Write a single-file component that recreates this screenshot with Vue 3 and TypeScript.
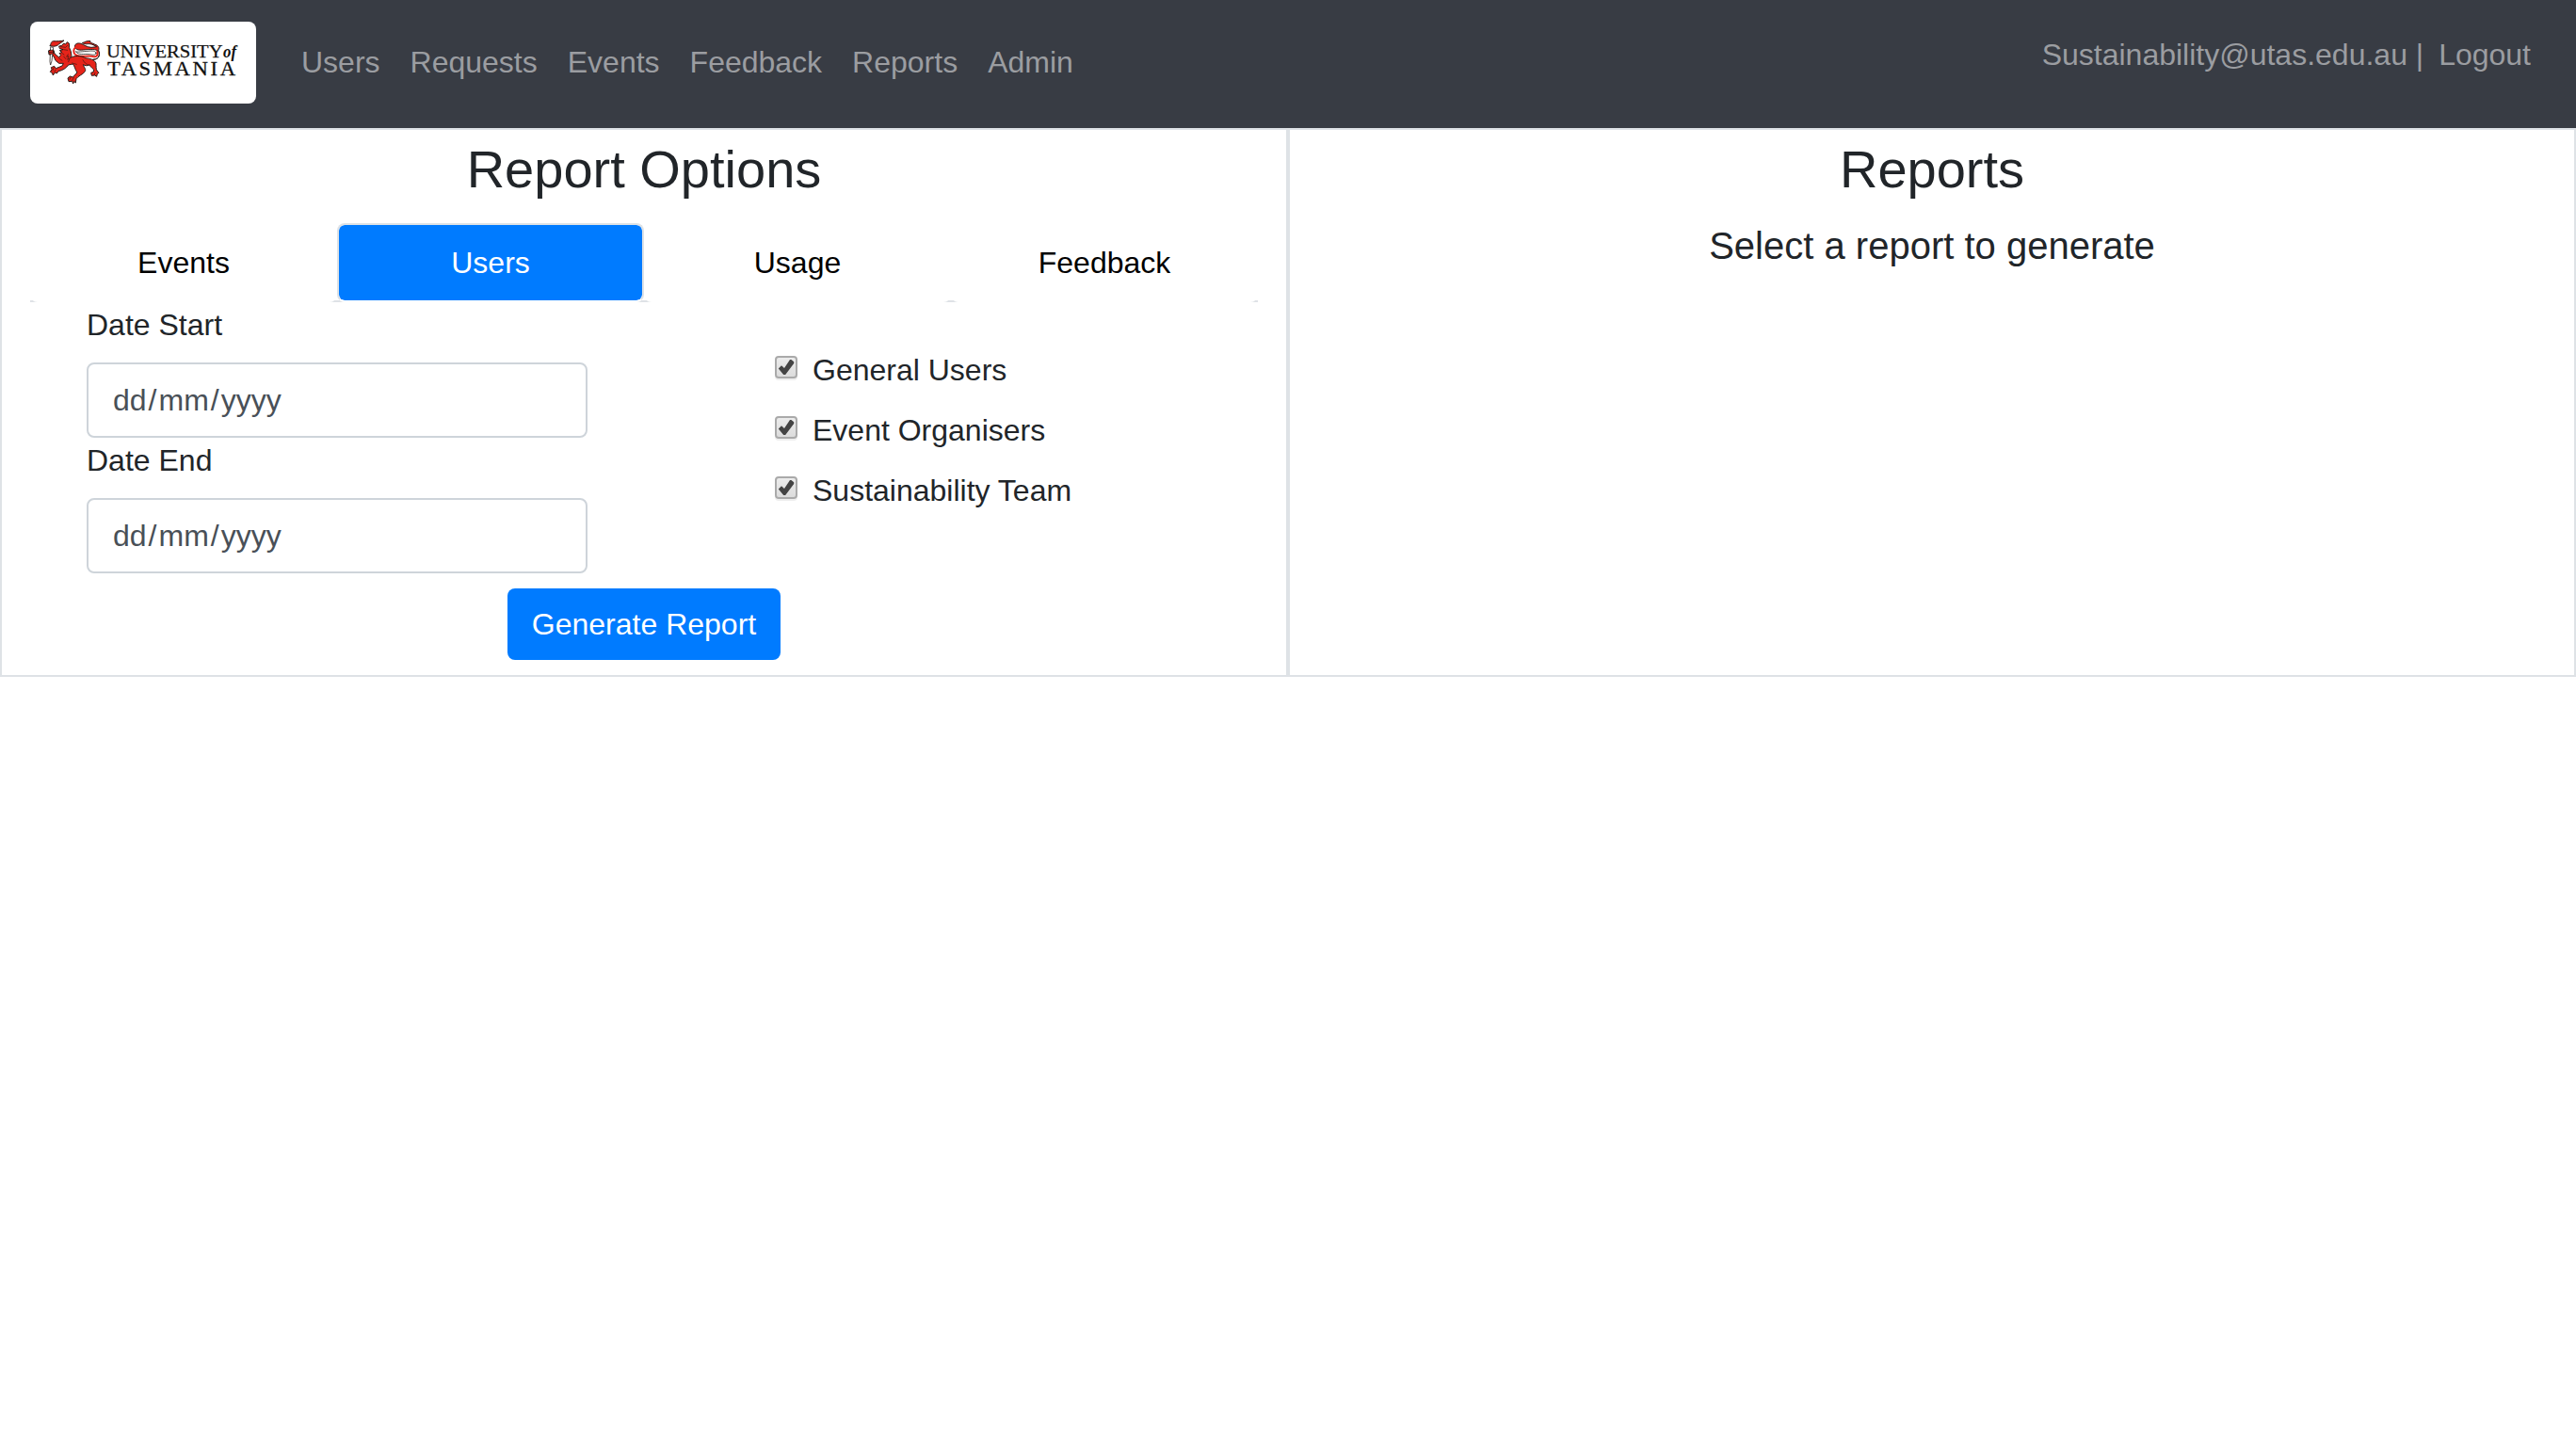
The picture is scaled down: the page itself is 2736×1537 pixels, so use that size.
<script setup lang="ts">
import { ref } from 'vue'

interface UserGroup {
  label: string
  checked: boolean
}

const navLinks: string[] = ['Users', 'Requests', 'Events', 'Feedback', 'Reports', 'Admin']
const tabs: string[] = ['Events', 'Users', 'Usage', 'Feedback']
const activeTab = ref('Users')
const dateFields: string[] = ['Date Start', 'Date End']
const groups = ref<UserGroup[]>([
  { label: 'General Users', checked: true },
  { label: 'Event Organisers', checked: true },
  { label: 'Sustainability Team', checked: true },
])
</script>

<template>
  <div class="page">
    <header class="navbar">
      <a class="brand">
        <svg viewBox="0 0 240 87" width="240" height="87">
          <g transform="translate(-32 -23) scale(.33333)" stroke="#1c1512" stroke-width="2.8" stroke-linejoin="round" stroke-linecap="round">
            <path fill="#e6241a" d="M296 190 C312 190 318 180 316 168 C312 156 294 157 278 158 C262 159 244 163 239 151 C236 141 246 135 258 139 C268 143 276 150 291 151 L308 149 C300 145 296 141 286 140 C278 139 272 143 262 137 C272 133 278 129 288 131 C284 136 298 138 303 142 C312 144 317 152 314 160 C318 170 318 184 306 188 Z" />
            <path fill="none" stroke="#e6241a" stroke-width="6" d="M310 164 C314 178 306 184 292 179 C272 177 248 185 237 171 C233 162 236 155 240 151" />
            <path fill="none" stroke-width="2.2" d="M306 169 C306 177 296 175 286 173 C268 171 250 177 241 164 C246 167 264 164 280 163 C296 161 304 162 306 169 Z" />
            <path fill="#e6241a" d="M189 147 L197 145 L203 138 L209 141 L214 134 L220 138 L221 152 L226 164 L228 178 L224 184 C236 177 258 176 273 185 C286 186 302 190 306 202 C307 211 305 219 309 225 L315 232 L310 236 L308 244 L302 240 L292 241 L290 232 L298 229 L299 222 C292 216 289 212 284 207 C279 211 270 209 265 206 C268 216 276 221 270 229 C263 238 249 242 243 251 L241 264 L236 259 L233 267 L230 259 L219 260 L216 249 L223 243 L232 246 L246 231 C238 221 239 211 232 204 L218 207 C211 217 199 225 186 227 L181 234 L175 231 L169 240 L166 232 L160 229 L165 221 L163 215 L173 211 L178 218 L198 210 L202 202 L188 202 L177 193 L171 179 L157 174 L155 162 L163 157 L171 160 L174 171 L188 183 L194 175 L189 170 L197 166 L190 161 L201 158 L191 155 Z" />
            <path fill="#e6241a" d="M160 145 C164 139 160 134 170 131 C183 132 193 131 204 129 C196 136 190 138 184 144 C175 149 166 149 160 145 Z" />
            <path fill="#fff" stroke-width="2.2" d="M161 150 L159 196 L161 207 L165 194 L170 153 Z" />
            <path fill="#e6241a" stroke-width="2.2" d="M156 161 L169 159 L171 171 L157 173 Z M157 167 L170 165" />
            <path fill="none" stroke-width="1.7" d="M194 149 L209 151 L215 145 M203 158 L215 160 M197 169 L204 174 M203 180 L210 188 M217 173 L212 181 L219 179 L215 190 L222 186 L218 197 M188 186 L198 193 M230 201 L244 205 M264 191 C270 203 280 208 286 207 M226 244 L222 253 M235 247 L230 256 M171 216 L168 224 M177 222 L174 228 M303 232 L300 239" />
          </g>
          <g class="wordmark">
            <text x="81" y="37.5" font-size="19.5" textLength="123.5" lengthAdjust="spacingAndGlyphs">UNIVERSITY</text>
            <text class="of" x="205" y="37.5" font-size="19.5" textLength="14" lengthAdjust="spacingAndGlyphs">of</text>
            <text transform="translate(82 57) scale(1.08 1)" x="0" y="0" font-size="21" textLength="126" lengthAdjust="spacing">TASMANIA</text>
          </g>
        </svg>
      </a>
      <nav class="links">
        <a v-for="link in navLinks" :key="link">{{ link }}</a>
      </nav>
      <div class="account">
        <span>Sustainability@utas.edu.au |</span>
        <a>Logout</a>
      </div>
    </header>

    <main class="columns">
      <section class="panel">
        <h2>Report Options</h2>
        <div class="tabs">
          <a
            v-for="tab in tabs"
            :key="tab"
            :class="{ active: tab === activeTab }"
            @click="activeTab = tab"
          >{{ tab }}</a>
        </div>
        <div class="options">
          <div class="dates">
            <template v-for="field in dateFields" :key="field">
              <label>{{ field }}</label>
              <div class="date-input"><span>dd</span><span>/</span><span>mm</span><span>/</span><span>yyyy</span></div>
            </template>
          </div>
          <div class="groups">
            <label v-for="group in groups" :key="group.label" @click="group.checked = !group.checked">
              <span class="box">
                <svg v-if="group.checked" viewBox="0 0 24 24" width="24" height="24">
                  <path fill="#444" d="M3.8 13.4 L7 10.2 L10 13 L16 4 L17.4 4 L20.2 6.2 L20.2 8 L11.2 20 L9.2 20 Z" />
                </svg>
              </span>
              {{ group.label }}
            </label>
          </div>
        </div>
        <button class="generate" type="button">Generate Report</button>
      </section>
      <section class="panel">
        <h2>Reports</h2>
        <h5>Select a report to generate</h5>
      </section>
    </main>
  </div>
</template>

<style>
body {
  margin: 0;
  background: #fff;
}
</style>

<style scoped>
.page,
.page * {
  box-sizing: border-box;
}
.page {
  font-family: "Liberation Sans", Arial, sans-serif;
  font-size: 32px;
  line-height: 48px;
  color: #212529;
}
.navbar {
  display: flex;
  height: 136px;
  padding: 23px 48px 0 32px;
  background: #383c44;
  color: #9b9da1;
}
.brand {
  display: block;
  width: 240px;
  height: 87px;
  border-radius: 8px;
  background: #fff;
}
.brand svg {
  display: block;
}
.wordmark {
  font-family: "Liberation Serif", serif;
  fill: #111;
  stroke: #111;
  stroke-width: 0.25;
}
.of {
  font-style: italic;
  font-weight: bold;
  stroke: none;
}
.links {
  display: flex;
  gap: 32px;
  margin-left: 48px;
  padding-top: 19px;
}
.account {
  display: flex;
  gap: 16px;
  margin-left: auto;
  padding-top: 11px;
  white-space: nowrap;
}
.columns {
  display: flex;
}
.panel {
  display: flex;
  flex-direction: column;
  width: 50%;
  height: 583px;
  padding: 8px 30px 0;
  border: 2px solid #dee2e6;
}
h2,
h5 {
  margin: 0;
  font-weight: 400;
  text-align: center;
}
h2 {
  height: 67px;
  margin-bottom: 24px;
  font-size: 56px;
  line-height: 67px;
}
h5 {
  font-size: 40px;
  line-height: 48px;
}
.tabs {
  display: flex;
  height: 84px;
  border-bottom: 2px solid #dee2e6;
}
.tabs a {
  flex: 1;
  height: 84px;
  padding: 16px 0;
  border: 2px solid #fff;
  border-radius: 8px;
  background: #fff;
  color: #000;
  text-align: center;
}
.tabs a.active {
  border-color: #dee2e6 #dee2e6 #fff;
  background: #007bff;
  background-clip: padding-box;
  color: #fff;
}
.options {
  display: flex;
  padding-left: 60px;
}
.dates {
  display: flex;
  flex-direction: column;
  width: 532px;
}
.dates label {
  margin-bottom: 16px;
}
.date-input {
  display: flex;
  gap: 2px;
  height: 80px;
  padding: 14px 26px;
  border: 2px solid #ced4da;
  border-radius: 8px;
  color: #495057;
}
.groups {
  margin-left: 199px;
  padding-top: 48px;
}
.groups label {
  display: flex;
  gap: 16px;
  height: 48px;
  margin-bottom: 16px;
}
.box {
  width: 24px;
  height: 24px;
  margin-top: 9px;
  border: 2px solid #aaa;
  border-radius: 4px;
  background: linear-gradient(#ececec, #dcdcdc);
  box-shadow: 0 2px 0 #eee;
}
.box svg {
  display: block;
  margin: -2px;
}
.generate {
  align-self: center;
  width: 290px;
  height: 76px;
  margin-top: 16px;
  padding: 0;
  border: 0;
  border-radius: 8px;
  background: #007bff;
  color: #fff;
  font: inherit;
}
</style>
